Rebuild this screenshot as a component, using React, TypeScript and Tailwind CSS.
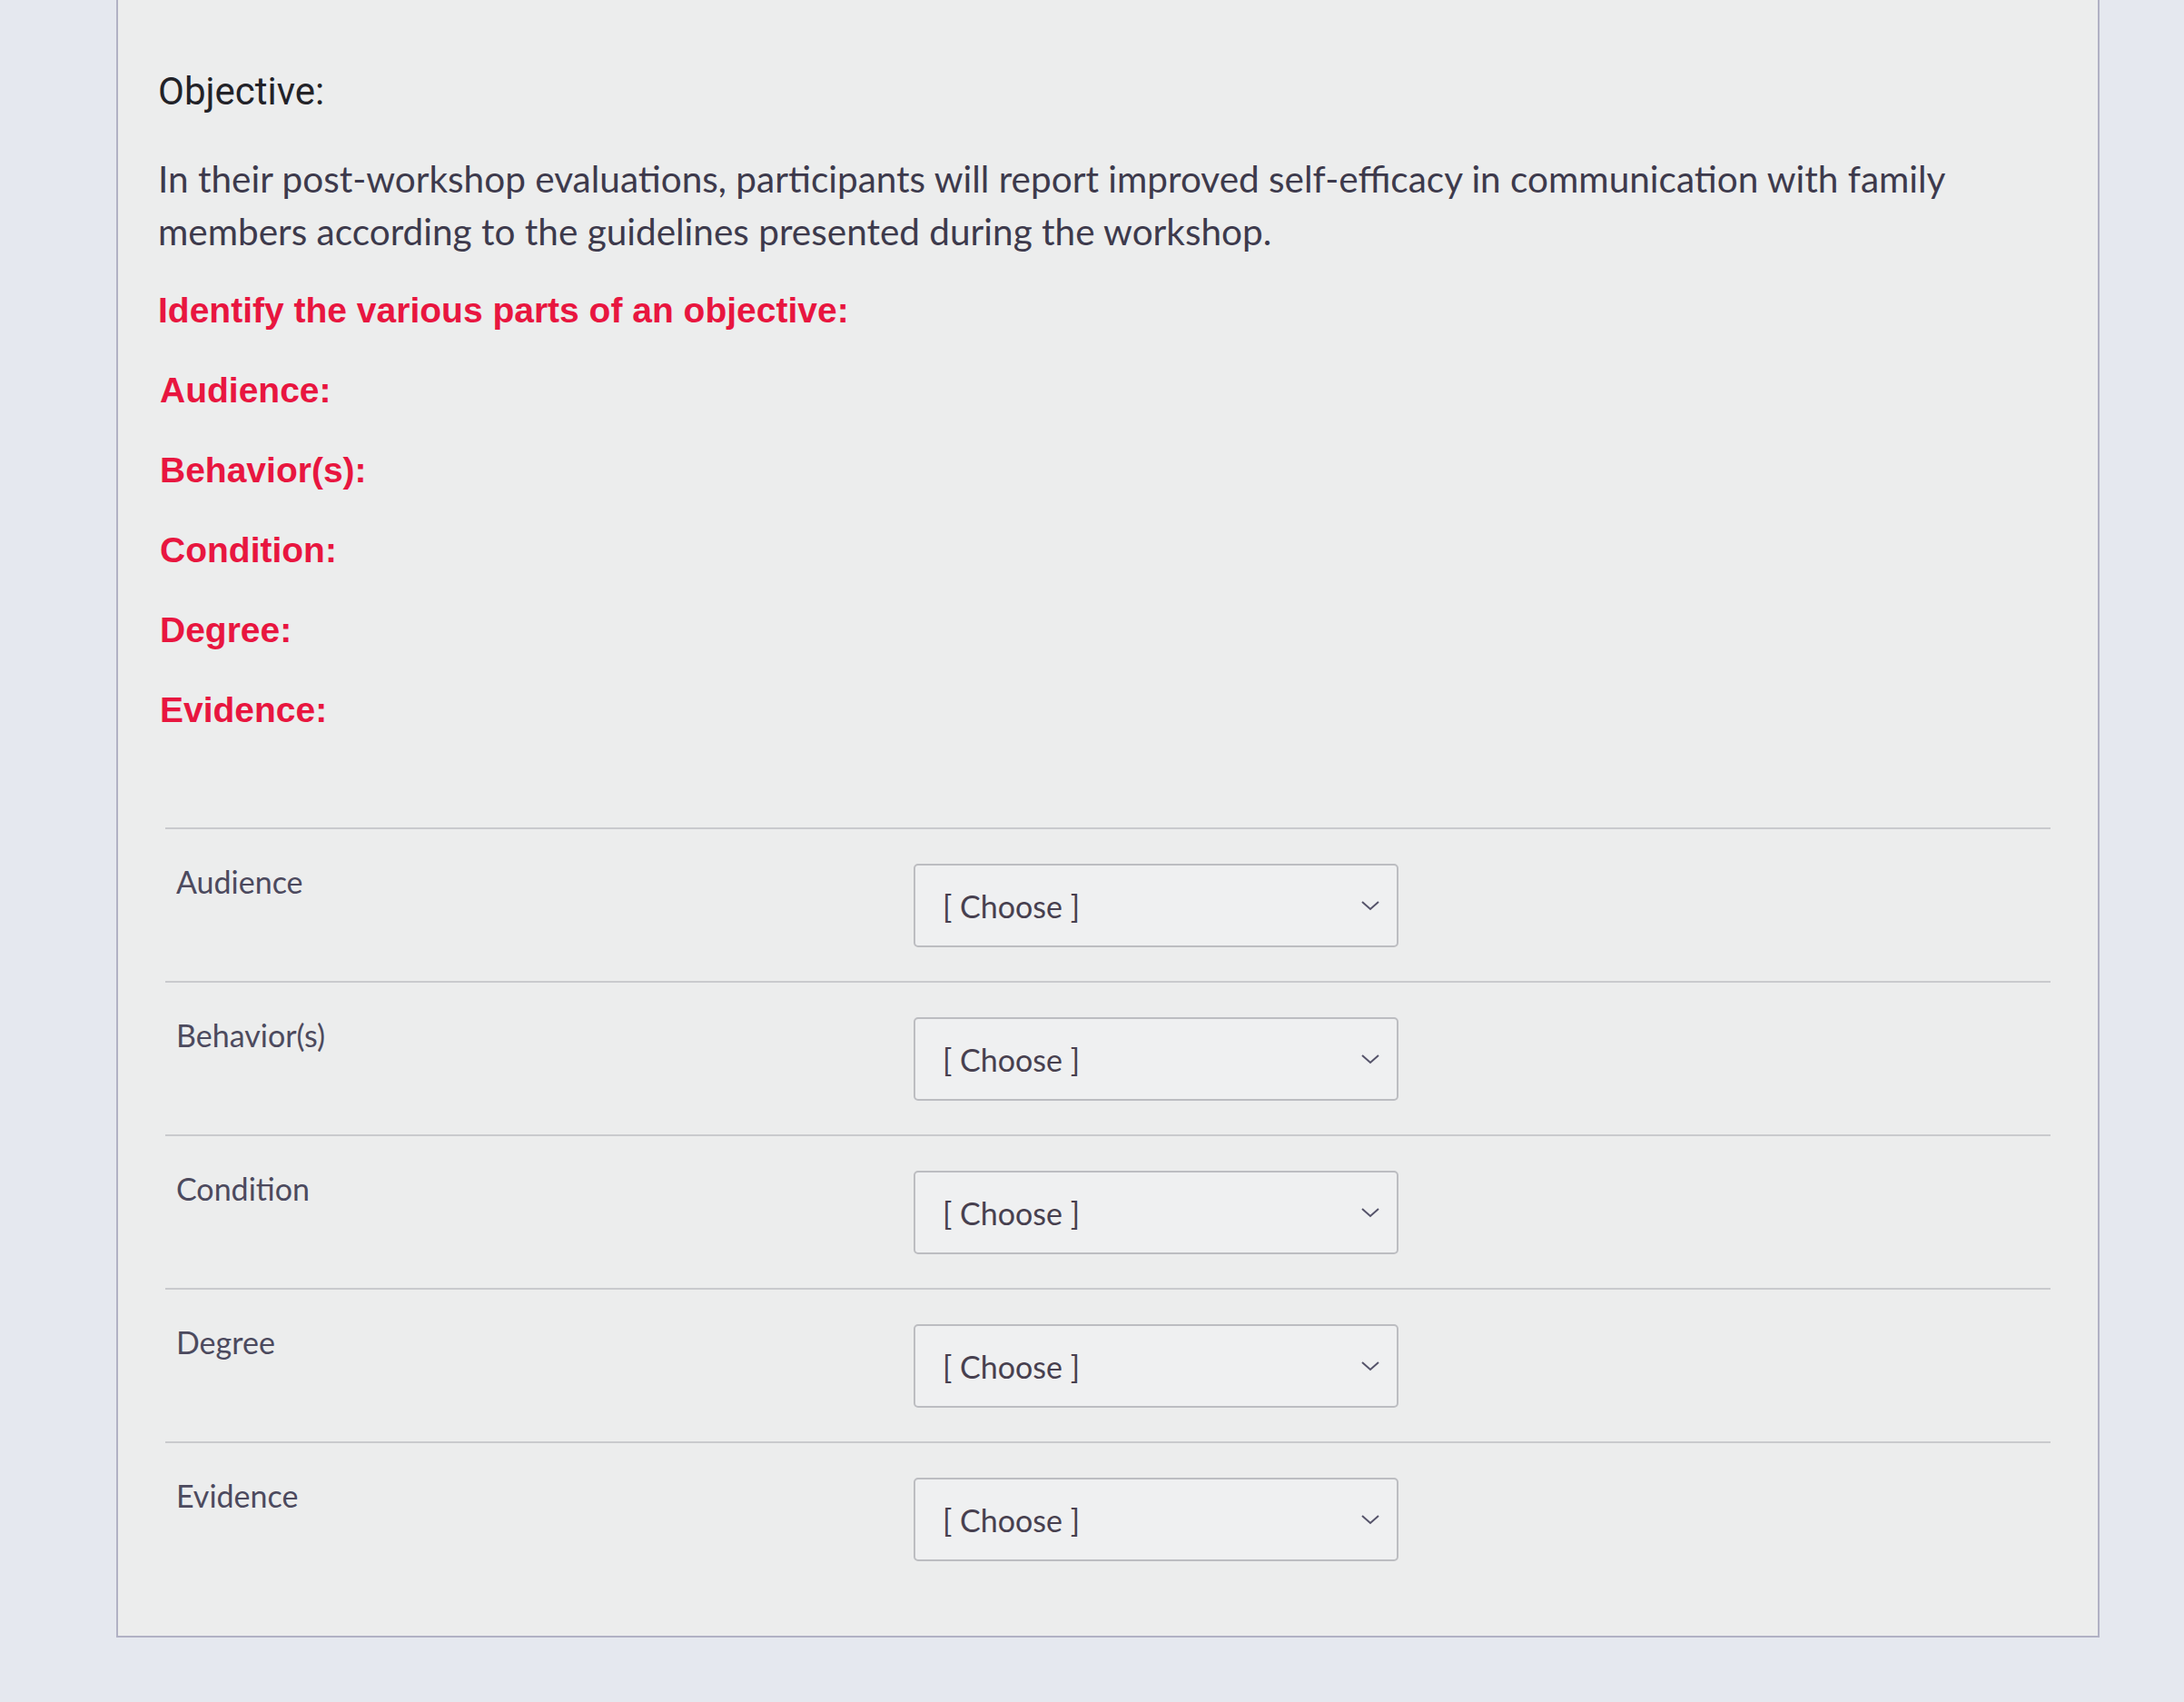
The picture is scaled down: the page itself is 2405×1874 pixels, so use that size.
import React from 'react';

const parts = ['Audience', 'Behavior(s)', 'Condition', 'Degree', 'Evidence'];

const ChoiceSelect: React.FC = () => (
  <div className="w-[534px] h-[92px] border-2 border-[#bcbdc1] rounded-[5px] bg-[#eff0f1] flex items-center justify-between pl-[30px] pr-[18px]">
    <span className="font-['Lato',sans-serif] text-[34px] text-[#47404f]">[ Choose ]</span>
    <svg width="22" height="14" viewBox="0 0 22 14" fill="none">
      <path d="M2 3 L11 11 L20 3" stroke="#55536a" strokeWidth="2" />
    </svg>
  </div>
);

const App: React.FC = () => {
  return (
    <div className="min-h-screen w-full bg-[#e5e8ef] overflow-hidden">
      <div className="ml-[128px] w-[2184px] bg-[#eceded] border-l-2 border-r-2 border-b-2 border-[#b1b1c4] pl-[44px] pr-[52px] pt-[77px] pb-[82px]">
        <h2 className="font-['Roboto',sans-serif] font-normal text-[42px] leading-[48px] text-[#222228]">Objective:</h2>

        <p className="mt-[43px] font-['Lato',sans-serif] text-[40.5px] leading-[58px] text-[#3d3a4c]">
          In their post-workshop evaluations, participants will report improved self-efficacy in communication with family members according to the guidelines presented during the workshop.
        </p>

        <div className="font-['Liberation_Sans',Arial,sans-serif] font-bold text-[39px] leading-[48px] text-[#e8163f]">
          <p className="mt-[34px]">Identify the various parts of an objective:</p>
          {parts.map(p => (
            <p key={p} className="mt-[40px] ml-[2px]">{p}:</p>
          ))}
        </div>

        <div className="mt-[105px] ml-[8px]">
          {parts.map(p => (
            <div key={p} className="border-t-2 border-[#c9cacd] pt-[38px] pb-[37px] last:pb-0 flex items-start">
              <div className="w-[824px] pl-[12px] font-['Lato',sans-serif] text-[34px] leading-[40px] text-[#4c4a5e]">{p}</div>
              <ChoiceSelect />
            </div>
          ))}
        </div>
      </div>
    </div>
  );
};

export default App;
